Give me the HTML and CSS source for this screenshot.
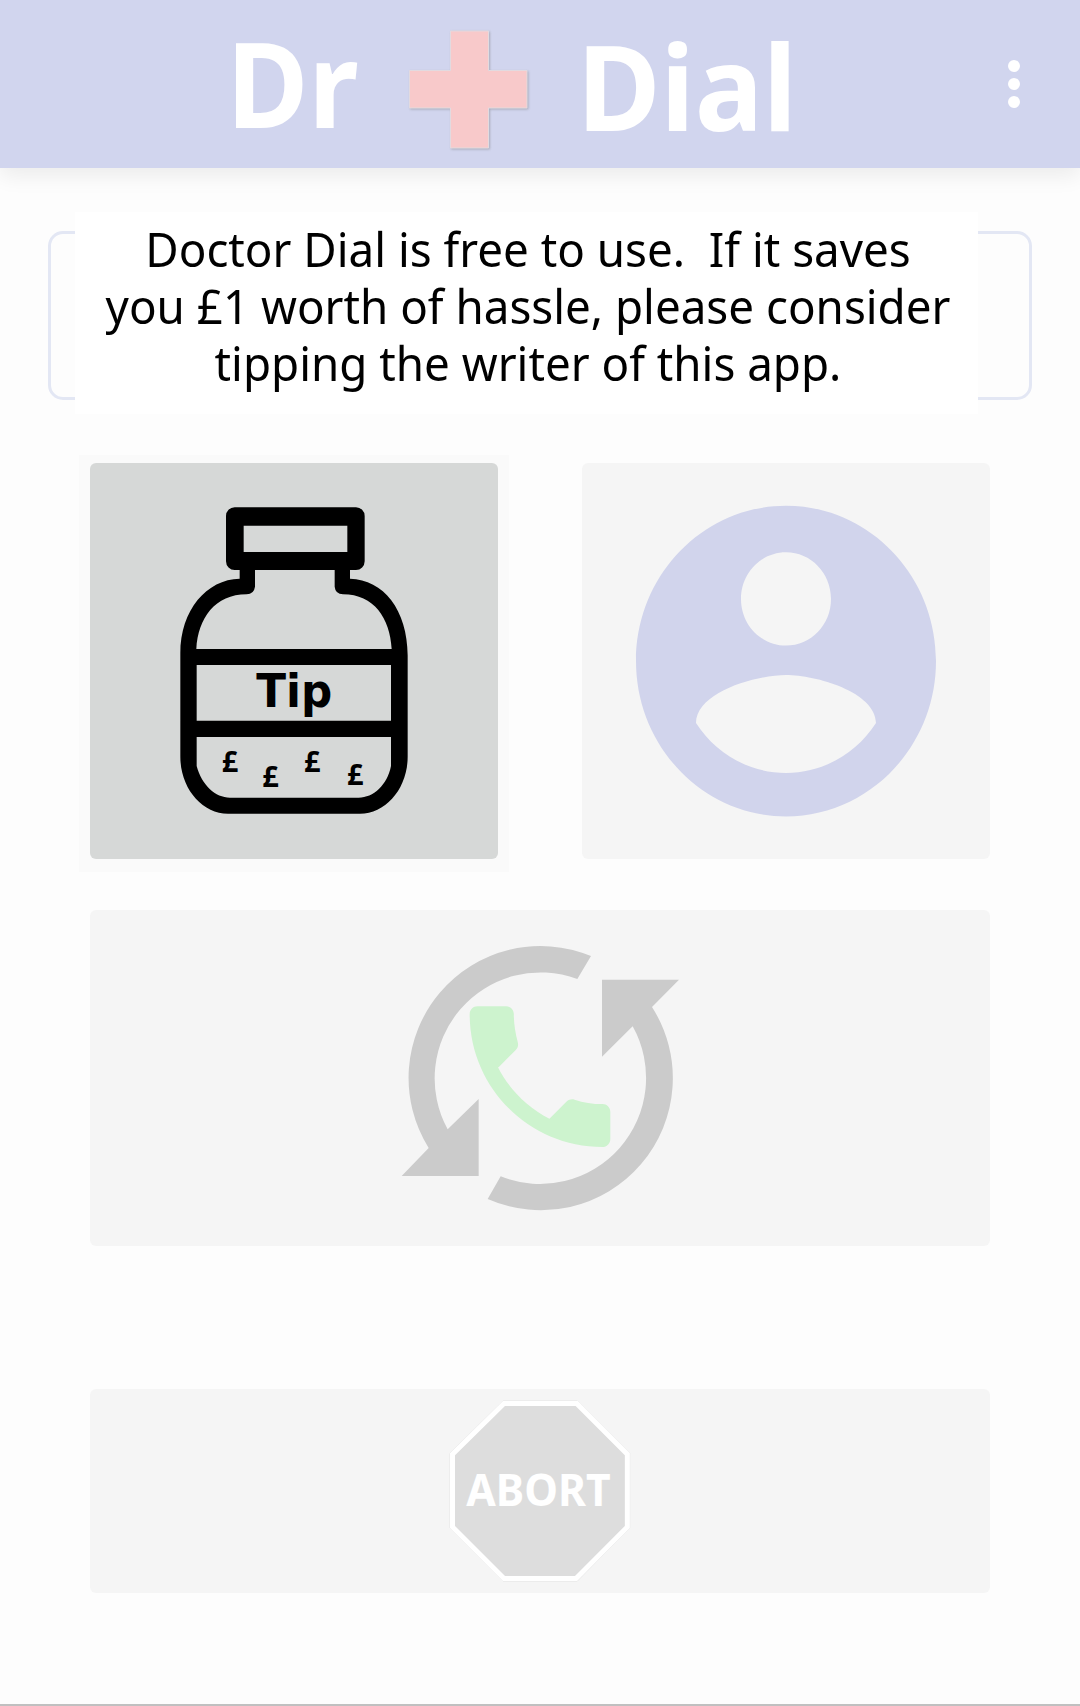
FILE: index.html
```html
<!DOCTYPE html>
<html lang="en">
<head>
<meta charset="utf-8">
<title>Dr Dial</title>
<link rel="stylesheet" href="styles.css">
</head>
<body>
<header class="app-bar">
  <svg class="logo" viewBox="0 0 960 168" role="img" aria-label="Dr Dial">
    <text class="logo-text" x="226.5" y="128" textLength="132" lengthAdjust="spacingAndGlyphs">Dr</text>
    <path class="cross" d="M450.5 31H488.5V70.5H527V108H488.5V148H450.5V108H409.500V70.5H450.5Z"/>
    <text class="logo-text" x="577" y="131" textLength="220" lengthAdjust="spacingAndGlyphs">Dial</text>
  </svg>
  <button class="menu" aria-label="More options"><i></i><i></i><i></i></button>
</header>
<main class="content">
  <section class="notice">
    <div class="message">
      <p>Doctor Dial is free to use.&nbsp; If it saves<br>you £1 worth of hassle, please consider<br>tipping the writer of this app.</p>
    </div>
  </section>
  <section class="actions">
    <div class="spotlight">
      <button class="card tip" aria-label="Tip">
        <svg viewBox="60 69 1224 1188">
          <path d="M494 202H858A26 26 0 0 1 884 228V364A26 26 0 0 1 858 390H840V416C940 418 1013 510 1013 646V950C1013 1045 948 1121 870 1121H474C396 1121 331 1045 331 950V640C331 510 410 418 509 416V390H494A26 26 0 0 1 468 364V228A26 26 0 0 1 494 202ZM521 257V336H832V257ZM555 390V440Q552 462 530 463C435 463 384 535 379 627H965C960 535 912 463 819 463Q796 462 794 440V390ZM380 675V842H963V675ZM380 891V978C395 1035 436 1073 480 1073H866C910 1073 952 1035 963 978V891Z" fill-rule="evenodd"/>
          <text class="jar-label" x="559" y="800" textLength="228" lengthAdjust="spacingAndGlyphs">Tip</text>
          <g class="coins">
            <text x="455" y="995">£</text>
            <text x="577" y="1040">£</text>
            <text x="702" y="996">£</text>
            <text x="831" y="1035">£</text>
          </g>
        </svg>
      </button>
    </div>
    <button class="card" aria-label="Profile">
      <svg viewBox="66 69 1224 1188">
        <path class="person" transform="translate(138 104) scale(45 46.6)" d="M12 2C6.48 2 2 6.48 2 12s4.48 10 10 10 10-4.48 10-10S17.52 2 12 2zm0 3c1.66 0 3 1.34 3 3s-1.34 3-3 3-3-1.34-3-3 1.34-3 3-3zm0 14.2c-2.5 0-4.71-1.28-6-3.22.03-1.99 4-3.08 6-3.08 1.99 0 5.97 1.09 6 3.08-1.29 1.94-3.5 3.22-6 3.22z"/>
      </svg>
    </button>
    <button class="card redial" aria-label="Redial">
      <svg viewBox="-870 30 2700 1008">
        <g class="arrows">
          <path d="M633 168A396 396 0 0 0 146 744L65 828H296V597L203 688A318 318 0 0 1 592 237Z"/>
          <path d="M323 897A396 396 0 0 0 816 321L897 239H666V470L758 379A318 318 0 0 1 362 829Z"/>
        </g>
        <path class="phone" transform="translate(198.7 248.7) scale(23.44)" d="M6.62 10.79c1.44 2.83 3.76 5.14 6.59 6.59l2.2-2.2c.27-.27.67-.36 1.02-.24 1.12.37 2.33.57 3.57.57.55 0 1 .45 1 1V20c0 .55-.45 1-1 1-9.39 0-17-7.61-17-17 0-.55.45-1 1-1h3.65c.55 0 1 .45 1 1 0 1.25.2 2.45.5 3.57.11.35.03.74-.25 1.02l-2.2 2.2z"/>
      </svg>
    </button>
    <button class="card abort">
      <svg viewBox="-1020 27 2700 612">
        <path class="sign-edge" d="M219 63H442L599 220V444L442 603H219L60 444V220Z"/>
        <path class="sign" d="M222 70.5H440L592 223V441L438 595.5H222L67.5 441V223Z"/>
        <text class="sign-text" x="109" y="378" textLength="433" lengthAdjust="spacingAndGlyphs">ABORT</text>
      </svg>
    </button>
  </section>
</main>
</body>
</html>
```
FILE: styles.css
```css
* { box-sizing: border-box; }

body {
  margin: 0;
  width: 1080px;
  height: 1706px;
  display: flex;
  flex-direction: column;
  background: #fdfdfd;
  border-bottom: 2px solid #c0c0c0;
  font-family: "Noto Sans", sans-serif;
  overflow: hidden;
}

button {
  margin: 0;
  padding: 0;
  border: 0;
  font: inherit;
}

.app-bar {
  display: flex;
  flex: none;
  height: 168px;
  background: #d1d5ee;
  box-shadow: 0 8px 20px rgba(0, 0, 0, 0.07);
}

.logo { width: 960px; height: 168px; }

.logo-text {
  font-size: 119px;
  font-weight: 700;
  fill: #fff;
}

.cross {
  fill: #f8c9ca;
  stroke: #e2dadf;
  stroke-width: 1;
  filter: drop-shadow(1px 1.5px 1px rgba(110, 110, 110, 0.4));
}

.menu {
  display: flex;
  flex-direction: column;
  justify-content: center;
  align-items: center;
  gap: 6px;
  width: 108px;
  background: none;
}

.menu i {
  width: 12px;
  height: 12px;
  border-radius: 50%;
  background: #fff;
}

.content {
  display: flex;
  flex-direction: column;
  padding: 63px 48px 0;
}

.notice {
  height: 169px;
  border: 3px solid #e3e7f4;
  border-radius: 15px;
  padding-left: 24px;
}

.message {
  width: 903px;
  height: 202px;
  margin-top: -22px;
  padding: 8px 0 0 3px;
  background: #fff;
}

.message p {
  margin: 0;
  color: #000;
  font-size: 48px;
  line-height: 57px;
  text-align: center;
  white-space: nowrap;
  transform: scaleX(0.953);
}

.actions {
  display: grid;
  grid-template-columns: 408px 408px;
  grid-template-rows: 396px 387px 347px;
  column-gap: 84px;
  margin: 63px 42px 0;
}

.card {
  display: block;
  border-radius: 6px;
  background: #f5f5f5;
}

.card svg { display: block; width: 100%; height: 100%; }

.spotlight {
  margin: -8px -11px -13px;
  padding: 8px 11px 13px;
  background: #fafafa;
}

.tip {
  width: 408px;
  height: 396px;
  background: #d6d8d7;
}

.redial,
.abort {
  grid-column: span 2;
  align-self: end;
}

.redial { height: 336px; }
.abort { height: 204px; }

.jar-label { font: 700 138px "DejaVu Sans", sans-serif; }
.coins { font-size: 86px; font-weight: 700; }
.person { fill: #d1d4ec; }
.arrows { fill: #cbcbcb; }
.phone { fill: #cdf3ce; }
.sign-edge { fill: none; stroke: #ddd; stroke-width: 2; }
.sign { fill: #ddd; stroke: #fff; stroke-width: 15; }
.sign-text { font-size: 134px; font-weight: 700; fill: #fff; }
```
